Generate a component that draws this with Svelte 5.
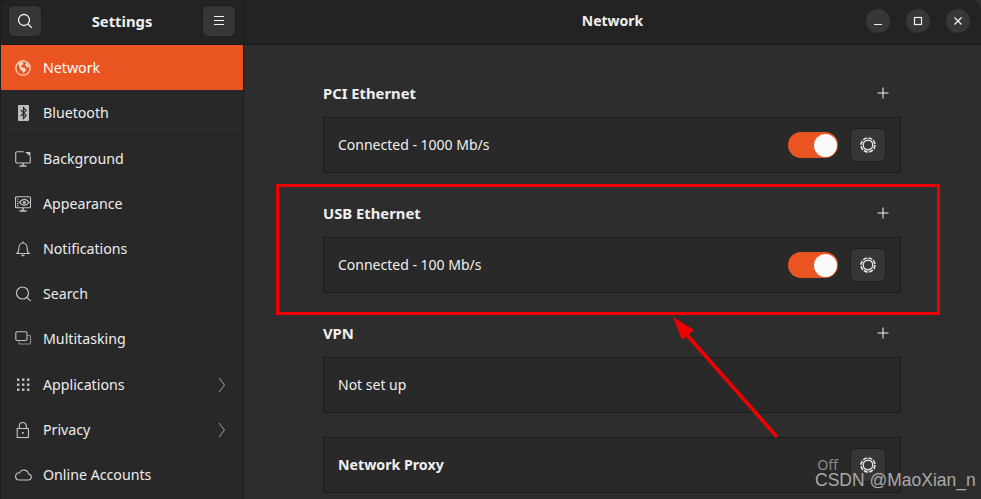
<script>
	const menu = [
		{ name: 'Network', icon: 'globe', active: true },
		{ name: 'Bluetooth', icon: 'bluetooth', sep: true },
		{ name: 'Background', icon: 'background' },
		{ name: 'Appearance', icon: 'appearance' },
		{ name: 'Notifications', icon: 'bell' },
		{ name: 'Search', icon: 'search' },
		{ name: 'Multitasking', icon: 'multitask', sep: true },
		{ name: 'Applications', icon: 'apps', more: true },
		{ name: 'Privacy', icon: 'lock', more: true },
		{ name: 'Online Accounts', icon: 'cloud' }
	];

	const sections = [
		{ title: 'PCI Ethernet', label: 'Connected - 1000 Mb/s', toggle: true },
		{ title: 'USB Ethernet', label: 'Connected - 100 Mb/s', toggle: true },
		{ title: 'VPN', label: 'Not set up' }
	];
</script>

{#snippet gear()}
	<svg class="gear" width="18" height="18" viewBox="0 0 18 18" fill="none" stroke="#e4e4e4">
		<circle cx="9" cy="9" r="4.8" stroke-width="1.4" />
		<circle cx="9" cy="9" r="7" stroke-width="1.6" stroke-dasharray="4.2 1.3" />
	</svg>
{/snippet}

{#snippet plus()}
	<svg width="12" height="12" viewBox="0 0 12 12" stroke="#f2f2f2" stroke-width="1"><path d="M6 0.5v11M0.5 6h11" /></svg>
{/snippet}

{#snippet menuIcon(icon)}
	<svg width="18" height="18" viewBox="0 0 18 18" fill="none" stroke="#c4c4c4" stroke-width="1.1">
		{#if icon === 'globe'}
			<circle cx="8" cy="8" r="7.2" stroke="#fbd9c9" stroke-width="1.3" />
			<path d="M3 3.500l3-1.500 2.500.5-.5 2-2 1 1 2 3 .5 1 2-2.500 3.500-1.500-3-2-1-.5-2.500zM11 2.500l2.500 2.500.5 2.500-2.500-.5-1.500-2.500z" fill="#fbd9c9" stroke="none" />
		{:else if icon === 'bluetooth'}
			<rect x="3" y="0" width="11" height="16" rx="1" fill="#bdbdbd" stroke="none" />
			<path d="M5.700 4.800l5.400 5.600-2.600 3V2.600l2.600 3-5.400 5.600" stroke="#2a2a2a" stroke-width="1.2" />
		{:else if icon === 'background'}
			<path d="M8.500 0.800H2A1.300 1.300 0 0 0 .7 2.100v8.600A1.300 1.300 0 0 0 2 12h12a1.300 1.300 0 0 0 1.300-1.300V5.500" />
			<path d="M10 1h5.400v4.500z" fill="#c4c4c4" stroke="none" />
			<path d="M8 12v2.500M4.500 15h7" stroke-width="1.5" />
		{:else if icon === 'appearance'}
			<rect x=".5" y=".8" width="15" height="11" rx="1" />
			<path d="M8 12v2.500M4.500 15h7" stroke-width="1.5" />
			<path d="M2 3h1.400M2 5.300h1.400M2 7.600h1.400M2 9.900h1.400" />
			<path d="M4.500 6.400C6 4.300 7.400 3.400 9.300 3.400s3.300.9 4.800 3c-1.500 2.100-2.900 3-4.800 3s-3.300-.9-4.800-3z" />
			<circle cx="9.300" cy="6.400" r="1.500" fill="#c4c4c4" stroke="none" />
		{:else if icon === 'bell'}
			<path d="M2 12.500c1.300-1 1.800-2 1.800-4.500C3.800 4.500 5.500 2 8 2s4.200 2.500 4.200 6c0 2.500.5 3.500 1.800 4.500z" />
			<path d="M8 .5V2M6.500 14.500h3" stroke-width="1.400" />
		{:else if icon === 'search'}
			<circle cx="7.500" cy="7" r="6" stroke-width="1.200" />
			<path d="M12 11.500l3.700 3.700" stroke-width="1.200" />
		{:else if icon === 'multitask'}
			<rect x=".8" y=".8" width="11.200" height="8.700" rx="1.500" />
			<path d="M13 4.500h1.500a1 1 0 0 1 1 1v6.500a1 1 0 0 1-1 1H5a1 1 0 0 1-1-1v-1.500" stroke="#8e8e8e" />
		{:else if icon === 'apps'}
			<g fill="#c4c4c4" stroke="none">
				{#each [2, 7, 12] as y}
					{#each [2.500, 7.500, 12.500] as x}
						<rect x={x - 0.500} y={y - 0.500} width="2.400" height="2.400" />
					{/each}
				{/each}
			</g>
		{:else if icon === 'lock'}
			<rect x="2.200" y="6.500" width="11.200" height="9" />
			<path d="M4.300 6.500V4a3.500 3.500 0 0 1 7 0v2.500" />
			<rect x="6.900" y="10" width="1.800" height="1.800" fill="#c4c4c4" stroke="none" />
		{:else if icon === 'cloud'}
			<path d="M3.500 13h9.500a3 3 0 0 0 .5-6 4.800 4.800 0 0 0-9-1.300A3.700 3.700 0 0 0 3.500 13z" />
		{/if}
	</svg>
{/snippet}

<div class="window">
	<aside class="sidebar">
		<header class="side-head">
			<button class="tool" aria-label="Search">
				<svg width="16" height="16" viewBox="0 0 16 16" fill="none" stroke="#efefef" stroke-width="1.300">
					<circle cx="7" cy="7" r="5.500" /><path d="M11 11l3.700 3.700" />
				</svg>
			</button>
			<h1>Settings</h1>
			<button class="tool" aria-label="Menu">
				<svg width="12" height="10" viewBox="0 0 12 10" stroke="#f2f2f2" stroke-width="1"><path d="M1 .5h10M1 4.500h10M1 8.500h10" /></svg>
			</button>
		</header>
		<nav>
			{#each menu as item}
				<div class="row" class:active={item.active}>
					<span class="row-icon">{@render menuIcon(item.icon)}</span>
					<span class="row-name">{item.name}</span>
					{#if item.more}
						<svg class="chev" width="8" height="16" viewBox="0 0 8 16" fill="none" stroke="#a0a0a0" stroke-width="1"><path d="M1 1l5.500 7-5.500 7" /></svg>
					{/if}
				</div>
				{#if item.sep}<div class="sep"></div>{/if}
			{/each}
		</nav>
	</aside>

	<main class="main">
		<header class="main-head">
			<h2>Network</h2>
			<div class="controls">
				<span class="win-btn"><svg width="10" height="10" viewBox="0 0 10 10" stroke="#f0f0f0" stroke-width="1.200"><path d="M1 8.500h8" /></svg></span>
				<span class="win-btn"><svg width="10" height="10" viewBox="0 0 10 10" fill="none" stroke="#f0f0f0" stroke-width="1.200"><rect x="1.500" y="1.500" width="7" height="7" /></svg></span>
				<span class="win-btn"><svg width="10" height="10" viewBox="0 0 10 10" stroke="#f0f0f0" stroke-width="1.300"><path d="M1.500 1.500l7 7M8.500 1.500l-7 7" /></svg></span>
			</div>
		</header>

		<div class="content">
			{#each sections as s}
				<section class="section">
					<div class="sec-head">
						<h3>{s.title}</h3>
						{@render plus()}
					</div>
					<div class="box">
						<span class="box-label">{s.label}</span>
						{#if s.toggle}
							<div class="box-right">
								<span class="switch"><span class="knob"></span></span>
								<span class="gear-btn">{@render gear()}</span>
							</div>
						{/if}
					</div>
				</section>
			{/each}
			<div class="box">
				<strong class="box-label">Network Proxy</strong>
				<div class="box-right">
					<span class="off">Off</span>
					<span class="gear-btn">{@render gear()}</span>
				</div>
			</div>
		</div>
	</main>

	<!-- annotation drawn over the screenshot -->
	<div class="red-box"></div>
	<svg class="arrow" width="120" height="130" viewBox="0 0 120 130">
		<path d="M104 120L14 18" stroke="#f00000" stroke-width="3.6" />
		<path d="M0 0L9 23 21 13z" fill="#f00000" />
	</svg>
	<span class="watermark">CSDN @MaoXian_n</span>
</div>

<style>
	:global(body) {
		background: linear-gradient(90deg, #1c1c1c 50%, #2f2f2f 50%);
	}

	.window {
		position: relative;
		display: flex;
		width: 981px;
		height: 499px;
		overflow: hidden;
		border-radius: 10px 10px 0 0;
		font-family: 'Noto Sans', 'Open Sans', sans-serif;
		font-size: 14.2px;
		color: #f0f0f0;
	}

	.sidebar {
		width: 244px;
		flex-shrink: 0;
		box-sizing: border-box;
		background: #282828;
		border-left: 1px solid #1c1c1c;
		border-right: 1px solid #1c1c1c;
	}

	.side-head,
	.main-head {
		display: flex;
		align-items: center;
		height: 45px;
		box-sizing: border-box;
		padding-bottom: 3px;
		background: #232323;
		border-bottom: 1px solid #1a1a1a;
	}

	.side-head {
		justify-content: space-between;
		padding-left: 7px;
		padding-right: 7px;
	}

	h1,
	h2,
	h3 {
		margin: 0;
		font-size: 14.8px;
		font-weight: 700;
	}

	h2 {
		font-size: 14px;
	}

	.tool {
		display: flex;
		align-items: center;
		justify-content: center;
		width: 34px;
		height: 32px;
		padding: 0;
		background: #363636;
		border: 1px solid #1e1e1e;
		border-radius: 6px;
	}

	.row {
		display: flex;
		align-items: center;
		height: 45px;
		padding-left: 14px;
		padding-right: 17px;
		color: #ededed;
	}

	.row.active {
		background: #e95420;
		color: #fff;
	}

	.row-icon {
		display: flex;
		width: 18px;
		height: 16px;
		margin-right: 10px;
	}

	.row-name {
		flex: 1;
		padding-bottom: 1px;
	}

	.sep {
		height: 1px;
		background: #222222;
	}

	.main {
		flex: 1;
		background: #2d2d2d;
		min-width: 0;
	}

	.main-head {
		position: relative;
		justify-content: center;
	}

	.controls {
		position: absolute;
		right: 11px;
		top: 9px;
		display: flex;
		gap: 16px;
	}

	.win-btn {
		display: flex;
		align-items: center;
		justify-content: center;
		width: 24px;
		height: 24px;
		border-radius: 50%;
		background: #373737;
	}

	.content {
		width: 578px;
		margin-left: 79px;
		padding-top: 32px;
	}

	.section {
		margin-bottom: 24px;
	}

	.sec-head {
		display: flex;
		align-items: center;
		justify-content: space-between;
		height: 40px;
		box-sizing: border-box;
		padding-right: 12px;
		padding-bottom: 8px;
	}

	.box {
		display: flex;
		align-items: center;
		justify-content: space-between;
		height: 56px;
		box-sizing: border-box;
		padding: 0 14px;
		background: #292929;
		border: 1px solid #1c1c1c;
	}

	.box-label {
		padding-bottom: 2px;
		font-size: 14px;
	}

	strong.box-label {
		font-size: 14.2px;
	}

	.box-right {
		display: flex;
		align-items: center;
		gap: 12px;
	}

	.switch {
		display: flex;
		justify-content: flex-end;
		align-items: center;
		box-sizing: border-box;
		width: 50px;
		height: 26px;
		padding-right: 1px;
		border-radius: 13px;
		background: #e95420;
	}

	.knob {
		width: 23px;
		height: 23px;
		border-radius: 50%;
		background: #fafafa;
	}

	.gear-btn {
		display: flex;
		align-items: center;
		justify-content: center;
		width: 36px;
		height: 34px;
		box-sizing: border-box;
		background: #363636;
		border: 1px solid #1e1e1e;
		border-radius: 6px;
	}

	.off {
		color: #8a8a8a;
		padding-bottom: 2px;
	}

	.red-box {
		position: absolute;
		left: 276px;
		top: 184px;
		width: 658px;
		height: 125px;
		border: 3px solid #f00000;
	}

	.arrow {
		position: absolute;
		left: 673px;
		top: 317px;
	}

	.watermark {
		position: absolute;
		left: 815px;
		top: 470px;
		font-family: 'Liberation Sans', Arial, sans-serif;
		font-size: 17.5px;
		color: #a9a9a9;
		white-space: nowrap;
	}
</style>
